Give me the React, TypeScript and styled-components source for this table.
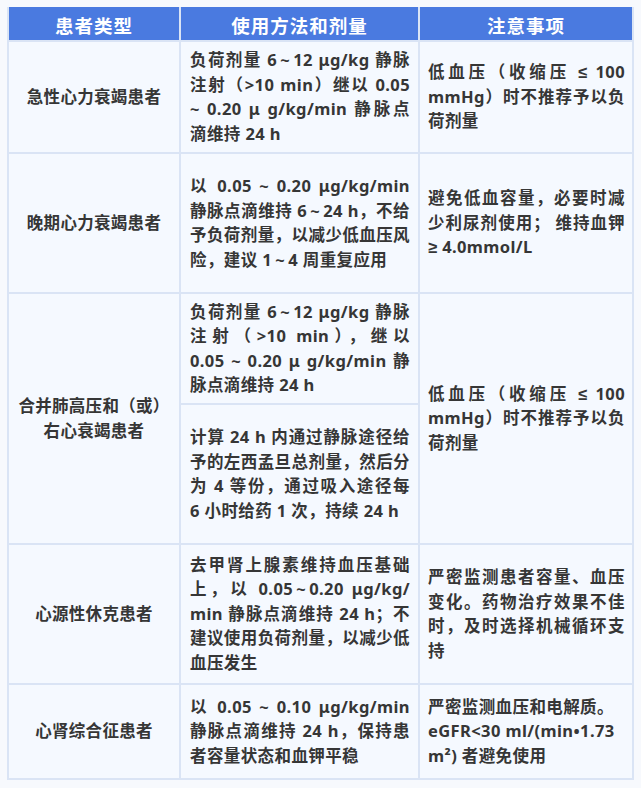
import React from "react";
import styled, { createGlobalStyle } from "styled-components";

const GlobalStyle = createGlobalStyle`
  html, body {
    margin: 0;
    padding: 0;
    background: #f7f9fd;
  }
  body {
    padding: 7px;
    font-family: "Noto Sans", "Liberation Sans", "Noto Sans CJK SC", sans-serif;
  }
`;

const Table = styled.div`
  display: grid;
  width: 627px;
  box-sizing: border-box;
  grid-template-columns: 170px 237px 212px;
  grid-template-rows: 31px 110px 138px 109px 138px 138px 93px;
  gap: 2px;
  padding: 2px;
  background: #dae4f5;
  color: #363636;
  font-family: "Noto Sans", "Liberation Sans", "Noto Sans CJK SC", sans-serif;
`;

const HeaderCell = styled.div`
  display: flex;
  align-items: center;
  justify-content: center;
  background: #4a7ae0;
  color: #ffffff;
  font-size: 18.5px;
  font-weight: 700;
  letter-spacing: 1px;
  margin: -2px 0 0;
  padding-top: 2px;
`;

const Cell = styled.div<{ $span?: number }>`
  background: #f5f9ff;
  display: flex;
  flex-direction: column;
  justify-content: center;
  font-size: 16.5px;
  font-weight: 700;
  line-height: 24.5px;
  letter-spacing: 0.4px;
  grid-row: ${(p) => (p.$span ? `span ${p.$span}` : "auto")};
`;

const TypeCell = styled(Cell)`
  align-items: center;
  text-align: center;
  letter-spacing: 0.3px;
`;

const TextCell = styled(Cell)<{ $col: 2 | 3 }>`
  padding: ${(p) => (p.$col === 2 ? "0 8px 0 9px" : "0 7px 0 8px")};
`;

const Line = styled.span<{ $last?: boolean }>`
  display: block;
  white-space: nowrap;
  text-align: ${(p) => (p.$last ? "left" : "justify")};
  text-align-last: ${(p) => (p.$last ? "left" : "justify")};
`;

type Row = {
  type: string[];
  method: string[][];
  note: string[];
  noteLeft?: number[];
};

const T = "\u2009~\u2009";

const rows: Row[] = [
  {
    type: ["急性心力衰竭患者"],
    method: [
      [
        `负荷剂量 6${T}12 μg/kg 静脉`,
        "注射（>10 min）继以 0.05",
        "~ 0.20 μ g/kg/min 静脉点",
        "滴维持 24 h",
      ],
    ],
    note: ["低血压（收缩压 ≤ 100", "mmHg）时不推荐予以负", "荷剂量"],
  },
  {
    type: ["晚期心力衰竭患者"],
    method: [
      [
        "以 0.05 ~ 0.20 μg/kg/min",
        `静脉点滴维持 6${T}24 h，不给`,
        "予负荷剂量，以减少低血压风",
        `险，建议 1${T}4 周重复应用`,
      ],
    ],
    note: ["避免低血容量，必要时减", "少利尿剂使用； 维持血钾", "≥ 4.0mmol/L"],
  },
  {
    type: ["合并肺高压和（或）", "右心衰竭患者"],
    method: [
      [
        `负荷剂量 6${T}12 μg/kg 静脉`,
        "注射（>10 min），继以",
        "0.05 ~ 0.20 μ g/kg/min 静",
        "脉点滴维持 24 h",
      ],
      [
        "计算 24 h 内通过静脉途径给",
        "予的左西孟旦总剂量，然后分",
        "为 4 等份，通过吸入途径每",
        "6 小时给药 1 次，持续 24 h",
      ],
    ],
    note: ["低血压（收缩压 ≤ 100", "mmHg）时不推荐予以负", "荷剂量"],
  },
  {
    type: ["心源性休克患者"],
    method: [
      [
        "去甲肾上腺素维持血压基础",
        `上，以 0.05${T}0.20 μg/kg/`,
        "min 静脉点滴维持 24 h；不",
        "建议使用负荷剂量，以减少低",
        "血压发生",
      ],
    ],
    note: ["严密监测患者容量、血压", "变化。药物治疗效果不佳", "时，及时选择机械循环支", "持"],
  },
  {
    type: ["心肾综合征患者"],
    method: [
      [
        "以 0.05 ~ 0.10 μg/kg/min",
        "静脉点滴维持 24 h，保持患",
        "者容量状态和血钾平稳",
      ],
    ],
    note: ["严密监测血压和电解质。", "eGFR<30 ml/(min•1.73", "m²) 者避免使用"],
    noteLeft: [0, 1],
  },
];

const Lines: React.FC<{ lines: string[]; left?: number[] }> = ({
  lines,
  left,
}) => (
  <>
    {lines.map((l, i) => (
      <Line key={i} $last={i === lines.length - 1 || (left ?? []).includes(i)}>
        {l}
      </Line>
    ))}
  </>
);

export default function App() {
  return (
    <>
      <GlobalStyle />
      <Table>
        <HeaderCell>患者类型</HeaderCell>
        <HeaderCell>使用方法和剂量</HeaderCell>
        <HeaderCell>注意事项</HeaderCell>
        {rows.map((r, ri) => {
          const span = r.method.length;
          return (
            <React.Fragment key={ri}>
              <TypeCell $span={span}>
                {r.type.map((t, i) => (
                  <div key={i}>{t}</div>
                ))}
              </TypeCell>
              <TextCell $col={2}>
                <Lines lines={r.method[0]} />
              </TextCell>
              <TextCell $col={3} $span={span}>
                <Lines lines={r.note} left={r.noteLeft} />
              </TextCell>
              {r.method.slice(1).map((m, mi) => (
                <TextCell $col={2} key={mi}>
                  <Lines lines={m} />
                </TextCell>
              ))}
            </React.Fragment>
          );
        })}
      </Table>
    </>
  );
}
